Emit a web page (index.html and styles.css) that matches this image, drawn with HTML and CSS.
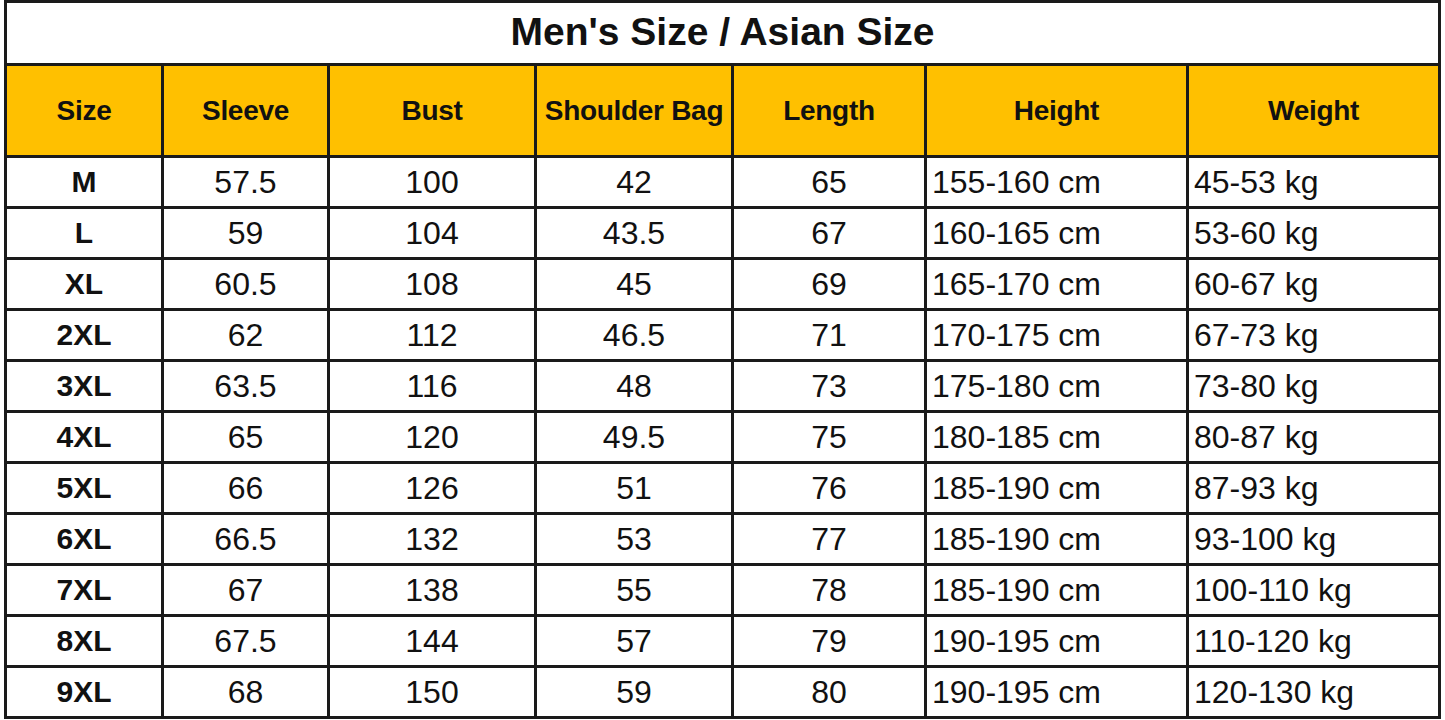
FILE: index.html
```html
<!DOCTYPE html>
<html>
<head>
<meta charset="utf-8">
<link rel="stylesheet" href="styles.css">
</head>
<body>
<table class="chart">
  <colgroup>
    <col class="c1"><col class="c2"><col class="c3"><col class="c4"><col class="c5"><col class="c6"><col class="c7">
  </colgroup>
  <tr class="title-row"><th colspan="7" class="title">Men's Size / Asian Size</th></tr>
  <tr class="head-row">
    <th>Size</th><th>Sleeve</th><th>Bust</th><th>Shoulder Bag</th><th>Length</th><th>Height</th><th>Weight</th>
  </tr>
  <tr><td class="sz">M</td><td>57.5</td><td>100</td><td>42</td><td>65</td><td class="l">155-160 cm</td><td class="l">45-53 kg</td></tr>
  <tr><td class="sz">L</td><td>59</td><td>104</td><td>43.5</td><td>67</td><td class="l">160-165 cm</td><td class="l">53-60 kg</td></tr>
  <tr><td class="sz">XL</td><td>60.5</td><td>108</td><td>45</td><td>69</td><td class="l">165-170 cm</td><td class="l">60-67 kg</td></tr>
  <tr><td class="sz">2XL</td><td>62</td><td>112</td><td>46.5</td><td>71</td><td class="l">170-175 cm</td><td class="l">67-73 kg</td></tr>
  <tr><td class="sz">3XL</td><td>63.5</td><td>116</td><td>48</td><td>73</td><td class="l">175-180 cm</td><td class="l">73-80 kg</td></tr>
  <tr><td class="sz">4XL</td><td>65</td><td>120</td><td>49.5</td><td>75</td><td class="l">180-185 cm</td><td class="l">80-87 kg</td></tr>
  <tr><td class="sz">5XL</td><td>66</td><td>126</td><td>51</td><td>76</td><td class="l">185-190 cm</td><td class="l">87-93 kg</td></tr>
  <tr><td class="sz">6XL</td><td>66.5</td><td>132</td><td>53</td><td>77</td><td class="l">185-190 cm</td><td class="l">93-100 kg</td></tr>
  <tr><td class="sz">7XL</td><td>67</td><td>138</td><td>55</td><td>78</td><td class="l">185-190 cm</td><td class="l">100-110 kg</td></tr>
  <tr><td class="sz">8XL</td><td>67.5</td><td>144</td><td>57</td><td>79</td><td class="l">190-195 cm</td><td class="l">110-120 kg</td></tr>
  <tr><td class="sz">9XL</td><td>68</td><td>150</td><td>59</td><td>80</td><td class="l">190-195 cm</td><td class="l">120-130 kg</td></tr>
</table>
</body>
</html>
```
FILE: styles.css
```css
html, body {
  margin: 0;
  padding: 0;
  background: #ffffff;
}
body {
  padding: 0 0 0 4px;
  font-family: "Liberation Sans", Arial, sans-serif;
  color: #111111;
}
.chart {
  border-collapse: collapse;
  table-layout: fixed;
  width: 1437px;
  border: 3px solid #1a1a1a;
}
.c1 { width: 157px; }
.c2 { width: 166px; }
.c3 { width: 207px; }
.c4 { width: 197px; }
.c5 { width: 193px; }
.c6 { width: 262px; }
.c7 { width: 252px; }
.chart th, .chart td {
  border: 3px solid #1a1a1a;
  padding: 0;
  text-align: center;
  vertical-align: middle;
  white-space: nowrap;
}
.title-row th {
  height: 58px;
  font-size: 39px;
  font-weight: bold;
  background: #ffffff;
  padding-bottom: 2px;
}
.head-row th {
  height: 89px;
  background: #ffc000;
  font-size: 28px;
  font-weight: bold;
  letter-spacing: -0.3px;
}
.chart td {
  height: 48px;
  font-size: 32px;
  font-weight: normal;
}
.chart td.sz {
  font-weight: bold;
  font-size: 30px;
}
.chart td.l {
  text-align: left;
  padding-left: 5px;
}
```
